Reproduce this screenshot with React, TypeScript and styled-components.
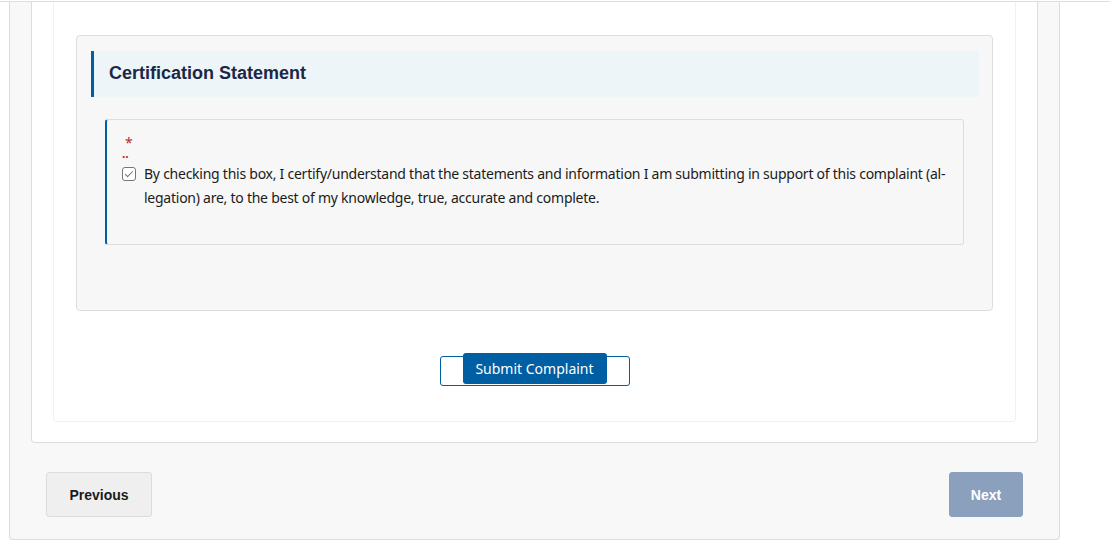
import React, { useState } from "react";
import styled, { createGlobalStyle } from "styled-components";

const GlobalStyle = createGlobalStyle`
  html, body {
    margin: 0;
    padding: 0;
    background: #ffffff;
  }
  body {
    font-family: "Noto Sans", "Open Sans", sans-serif;
    color: #1b1b1b;
  }
`;

const App: React.FC = () => {
  const [certified, setCertified] = useState<boolean>(true);

  return (
    <>
      <GlobalStyle />
      <TopRule />
      <Wizard>
        <StepCard>
          <StepPanel>
            <Fieldset>
              <SectionHeading>Certification Statement</SectionHeading>
              <CheckBlock>
                <Required>*</Required>
                <RequiredDots>..</RequiredDots>
                <CheckLabel>
                  <Box
                    type="checkbox"
                    checked={certified}
                    onChange={() => setCertified(!certified)}
                  />
                  <CheckText>
                    By checking this box, I certify/understand that the statements and information I am submitting in support of this complaint (al-
                    <br />
                    legation) are, to the best of my knowledge, true, accurate and complete.
                  </CheckText>
                </CheckLabel>
              </CheckBlock>
            </Fieldset>

            <SubmitRow>
              <SubmitFrame>
                <SubmitButton>Submit Complaint</SubmitButton>
              </SubmitFrame>
            </SubmitRow>
          </StepPanel>
        </StepCard>

        <NavRow>
          <NavButton>Previous</NavButton>
          <NavButton primary disabled>
            Next
          </NavButton>
        </NavRow>
      </Wizard>
    </>
  );
};

// ---------- styled components ----------

const TopRule = styled.div`
  height: 1px;
  border-bottom: 1px solid #dfdfdf;
`;

const Wizard = styled.div`
  margin-left: 9px;
  width: 1051px;
  box-sizing: border-box;
  background: #f8f8f8;
  border: 1px solid #dcdcdc;
  border-top: none;
  border-radius: 0 0 4px 4px;
  padding: 0 21px 22px 21px;
`;

const StepCard = styled.div`
  background: #ffffff;
  border: 1px solid #dcdcdc;
  border-top: none;
  border-radius: 0 0 4px 4px;
  padding: 0 21px 20px 21px;
`;

const StepPanel = styled.div`
  border: 1px solid #f1f1f1;
  border-top: none;
  border-radius: 0 0 4px 4px;
  padding: 33px 22px 35px 22px;
`;

const Fieldset = styled.div`
  background: #f7f7f7;
  border: 1px solid #dddddd;
  border-radius: 4px;
  padding: 15px 13px 65px 14px;
`;

const SectionHeading = styled.h2`
  margin: 0;
  height: 46px;
  box-sizing: border-box;
  display: flex;
  align-items: center;
  background: #eef5f9;
  border-left: 3px solid #005ea2;
  padding-left: 15px;
  padding-bottom: 2px;
  font-family: "Liberation Sans", Arial, sans-serif;
  font-size: 18px;
  font-weight: 700;
  color: #1b2845;
`;

const CheckBlock = styled.div`
  margin: 22px 15px 0 14px;
  height: 126px;
  box-sizing: border-box;
  background: #f7f7f7;
  border: 1px solid #dddddd;
  border-left: 2px solid #005ea2;
  border-radius: 3px;
  padding: 16px 15px 0 15px;
`;

const Required = styled.div`
  color: #c1272d;
  font-size: 14px;
  line-height: 14px;
  padding-left: 3px;
`;

const RequiredDots = styled.div`
  color: #c1272d;
  font-size: 12px;
  line-height: 8px;
  height: 12px;
  font-weight: 700;
`;

const CheckLabel = styled.label`
  display: flex;
  align-items: flex-start;
  gap: 8px;
`;

const Box = styled.input`
  appearance: none;
  -webkit-appearance: none;
  flex: none;
  width: 14px;
  height: 14px;
  margin: 5px 0 0 0;
  border: 1px solid #767676;
  border-radius: 3px;
  background: #ffffff;
  position: relative;
  cursor: pointer;

  &:checked::after {
    content: "";
    position: absolute;
    left: 4px;
    top: 1px;
    width: 3px;
    height: 7px;
    border: solid #6f6f6f;
    border-width: 0 1.5px 1.5px 0;
    transform: rotate(45deg);
  }
`;

const CheckText = styled.span`
  font-size: 14px;
  line-height: 24px;
  letter-spacing: -0.25px;
  color: #1b1b1b;
  white-space: nowrap;
`;

const SubmitRow = styled.div`
  display: flex;
  justify-content: center;
  margin-top: 45px;
`;

const SubmitFrame = styled.span`
  display: inline-flex;
  justify-content: center;
  width: 190px;
  height: 30px;
  box-sizing: border-box;
  border: 1px solid #005ea2;
  border-radius: 3px;
  background: #ffffff;
`;

const SubmitButton = styled.button`
  margin-top: -4px;
  width: 144px;
  height: 31px;
  border: none;
  border-radius: 3px;
  background: #005ea2;
  color: #ffffff;
  font-family: "Noto Sans", "Open Sans", sans-serif;
  font-size: 14px;
  cursor: pointer;
`;

const NavRow = styled.div`
  display: flex;
  justify-content: space-between;
  padding: 29px 15px 0 15px;
`;

const NavButton = styled.button<{ primary?: boolean }>`
  height: 45px;
  padding: 0 20px;
  box-sizing: border-box;
  border-radius: 3px;
  border: 1px solid ${(p) => (p.primary ? "#8aa0bd" : "#dcdcdc")};
  background: ${(p) => (p.primary ? "#8aa0bd" : "#efefef")};
  color: ${(p) => (p.primary ? "#ffffff" : "#1b1b1b")};
  font-family: "Liberation Sans", Arial, sans-serif;
  font-size: 14px;
  font-weight: 700;
  cursor: ${(p) => (p.disabled ? "default" : "pointer")};
  width: ${(p) => (p.primary ? "74px" : "106px")};
`;

export default App;
